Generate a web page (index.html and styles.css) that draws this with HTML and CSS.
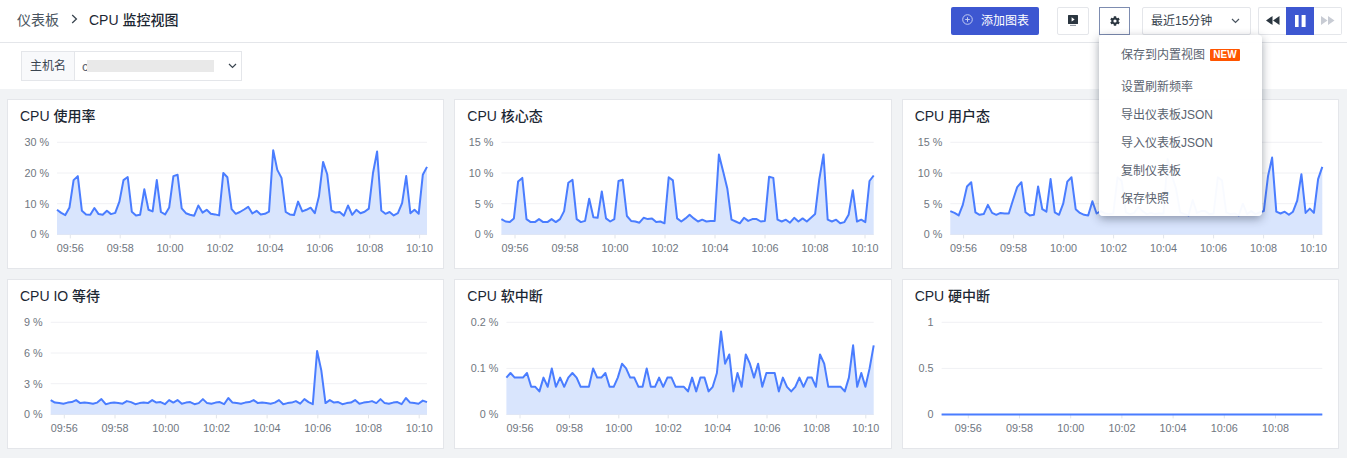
FILE: index.html
```html
<!DOCTYPE html>
<html lang="zh-CN">
<head>
    <meta charset="UTF-8">
    <meta name="viewport" content="width=device-width, initial-scale=1.0">
    <title>CPU 监控视图</title>
    <link rel="stylesheet" href="styles.css">
</head>
<body>
    <header class="topbar">
        <nav class="crumbs">
            <span class="crumb-parent">仪表板</span>
            <svg class="crumb-sep" width="7" height="10" viewBox="0 0 7 10"><path d="M1.2 1 5.4 5 1.2 9" fill="none" stroke="#3a4550" stroke-width="1.3"/></svg>
            <span class="crumb-current">CPU 监控视图</span>
        </nav>
        <div class="actions">
            <button class="btn-add">
                <svg width="11" height="11" viewBox="0 0 11 11"><circle cx="5.5" cy="5.5" r="4.8" fill="none" stroke="#c3ccf2" stroke-width="1"/><path d="M3.2 5.5h4.6M5.5 3.2v4.6" stroke="#c3ccf2" stroke-width="1"/></svg>
                添加图表
            </button>
            <button class="btn-icon btn-play">
                <svg width="10" height="11" viewBox="0 0 10 11"><path d="M.6 0h8.8a.6.6 0 0 1 .6.6v7.8a.6.6 0 0 1-.6.6H.6a.6.6 0 0 1-.6-.6V.6A.6.6 0 0 1 .6 0z" fill="#2b3640"/><path d="M3.6 2.3 6.6 4.4 3.6 6.5z" fill="#fff"/><path d="M2 10.4h6" stroke="#8a929c" stroke-width="1"/></svg>
            </button>
            <div class="settings">
                <button class="btn-icon btn-gear">
                    <svg width="12" height="12" viewBox="0 0 24 24"><path fill="#2b3640" d="M19.14 12.94c.04-.3.06-.61.06-.94 0-.32-.02-.64-.07-.94l2.03-1.58a.49.49 0 0 0 .12-.61l-1.92-3.32a.49.49 0 0 0-.59-.22l-2.39.96c-.5-.38-1.03-.7-1.62-.94l-.36-2.54a.48.48 0 0 0-.48-.41h-3.84c-.24 0-.43.17-.47.41l-.36 2.54c-.59.24-1.13.57-1.62.94l-2.39-.96a.48.48 0 0 0-.59.22L2.74 8.87c-.12.21-.08.47.12.61l2.03 1.58c-.05.3-.09.63-.09.94s.02.64.07.94l-2.03 1.58a.49.49 0 0 0-.12.61l1.92 3.32c.12.22.37.29.59.22l2.39-.96c.5.38 1.03.7 1.62.94l.36 2.54c.05.24.24.41.48.41h3.84c.24 0 .44-.17.47-.41l.36-2.54c.59-.24 1.13-.56 1.62-.94l2.39.96c.22.08.47 0 .59-.22l1.92-3.32c.12-.22.07-.47-.12-.61l-2.01-1.58zM12 15.2A3.2 3.2 0 1 1 12 8.8a3.2 3.2 0 0 1 0 6.4z"/></svg>
                </button>
                <ul class="menu">
                    <li class="menu-first">保存到内置视图<span class="badge-new">NEW</span></li>
                    <li>设置刷新频率</li>
                    <li>导出仪表板JSON</li>
                    <li>导入仪表板JSON</li>
                    <li>复制仪表板</li>
                    <li>保存快照</li>
                </ul>
            </div>
            <div class="range">
                <span class="range-text">最近15分钟</span>
                <svg width="9" height="6" viewBox="0 0 9 6"><path d="M1 1 4.5 4.5 8 1" fill="none" stroke="#4a5560" stroke-width="1.2"/></svg>
            </div>
            <div class="player">
                <button class="player-btn">
                    <svg width="14" height="9" viewBox="0 0 14 9"><path d="M6.5 0v9L0 4.5zM13.5 0v9L7 4.5z" fill="#2b3640"/></svg>
                </button>
                <button class="player-btn player-on">
                    <svg width="11" height="12" viewBox="0 0 11 12"><path d="M0 0h3.6v12H0zM6.6 0h4v12h-4z" fill="#fff"/></svg>
                </button>
                <button class="player-btn">
                    <svg width="14" height="9" viewBox="0 0 14 9"><path d="M0 0v9l6.5-4.5zM7 0v9l6.5-4.5z" fill="#c8ccd4"/></svg>
                </button>
            </div>
        </div>
    </header>

    <div class="filters">
        <div class="filter">
            <span class="filter-label">主机名</span>
            <div class="filter-value">
                <span class="host">c</span>
                <span class="host-mask"></span>
                <svg width="9" height="6" viewBox="0 0 9 6"><path d="M1 1 4.5 4.5 8 1" fill="none" stroke="#3a4550" stroke-width="1.2"/></svg>
            </div>
        </div>
    </div>

    <main class="grid" id="grid"></main>

    <script src="charts.js"></script>
</body>
</html>
```

FILE: styles.css
```css
* {
    box-sizing: border-box;
}
html, body {
    margin: 0;
    height: 100%;
}
body {
    font-family: "Liberation Sans", "Noto Sans CJK SC", sans-serif;
    font-size: 12px;
    color: #1c2733;
    background-color: #f1f3f5;
    overflow: hidden;
}
button {
    font-family: inherit;
    padding: 0;
    cursor: pointer;
}
.topbar {
    display: flex;
    justify-content: space-between;
    align-items: center;
    height: 43px;
    padding: 0 5px 1px 17px;
    background-color: #fff;
    border-bottom: 1px solid #e4e6ea;
}
.crumbs {
    display: flex;
    align-items: center;
    margin-bottom: 3px;
    font-size: 14px;
}
.crumb-parent {
    color: #4a5560;
}
.crumb-sep {
    margin: 0 11px 0 12px;
}
.crumb-current {
    font-weight: 500;
}
.actions {
    display: flex;
    align-items: center;
}
.btn-add {
    display: flex;
    align-items: center;
    gap: 8px;
    width: 88px;
    height: 28px;
    padding: 0 0 2px 11px;
    margin-right: 18px;
    font-size: 12px;
    color: #fff;
    background-color: #3d57d1;
    border: none;
    border-radius: 2px;
}
.btn-icon {
    display: flex;
    justify-content: center;
    align-items: center;
    width: 32px;
    height: 28px;
    background-color: #fff;
    border: 1px solid #e4e6ea;
    border-radius: 2px;
}
.btn-play {
    margin-right: 10px;
}
.btn-gear {
    width: 31px;
    border-color: #7d8cb0;
    border-radius: 0;
}
.settings {
    position: relative;
    margin-right: 12px;
}
.menu {
    position: absolute;
    top: 28px;
    left: 0;
    z-index: 5;
    width: 163px;
    margin: 0;
    padding: 6px 0 3px;
    list-style: none;
    background-color: rgba(255, 255, 255, 0.965);
    border-radius: 4px;
    box-shadow: 0 3px 10px rgba(30, 40, 60, 0.42);
}
.menu li {
    display: flex;
    align-items: center;
    height: 28px;
    padding: 0 0 2px 22px;
    color: #5a6370;
}
.menu .menu-first {
    margin-bottom: 4px;
}
.badge-new {
    width: 30px;
    height: 12px;
    margin: 2px 0 0 5px;
    font-size: 10px;
    font-weight: bold;
    line-height: 12px;
    text-align: center;
    color: #fff;
    background-color: #ff5500;
    border-radius: 1px;
}
.range {
    display: flex;
    justify-content: space-between;
    align-items: center;
    width: 109px;
    height: 28px;
    padding: 0 10px 0 8px;
    margin-right: 7px;
    color: #3a4550;
    background-color: #fff;
    border: 1px solid #e4e6ea;
    border-radius: 2px;
}
.range-text {
    margin-bottom: 2px;
}
.player {
    display: flex;
    height: 28px;
}
.player-btn {
    display: flex;
    justify-content: center;
    align-items: center;
    width: 28px;
    height: 28px;
    background-color: #fff;
    border: 1px solid #e4e6ea;
}
.player-btn:first-child {
    border-radius: 2px 0 0 2px;
    border-right: none;
}
.player-btn:last-child {
    border-radius: 0 2px 2px 0;
    border-left: none;
}
.player-on {
    background-color: #3d57d1;
    border-color: #3d57d1;
}
.filters {
    height: 46px;
    padding: 8px 0 0 21px;
    background-color: #fff;
}
.filter {
    display: flex;
    width: 221px;
    height: 30px;
    border: 1px solid #e4e6ea;
}
.filter-label {
    display: flex;
    align-items: center;
    width: 53px;
    padding: 0 0 3px 8px;
    color: #3a4550;
    background-color: #f8f9fb;
    border-right: 1px solid #e4e6ea;
}
.filter-value {
    display: flex;
    flex: 1;
    align-items: center;
    padding-left: 7px;
    color: #5a6370;
}
.host {
    width: 5px;
    font-size: 13px;
}
.host-mask {
    width: 127px;
    height: 12px;
    margin-right: 14px;
    background-color: #e9e9e9;
}
.grid {
    display: grid;
    grid-template-columns: repeat(3, 1fr);
    grid-auto-rows: 170px;
    gap: 10px;
    padding: 10px 8px 0 7px;
}
.card {
    background-color: #fff;
    border: 1px solid #e4e6ea;
}
.card-title {
    height: 32px;
    margin: 0;
    padding: 8px 0 0 12px;
    font-size: 14px;
    font-weight: 500;
    line-height: 16px;
    color: #1c2733;
}
.chart {
    display: block;
    width: 435px;
    height: 136px;
}
.chart text {
    font-size: 10.8px;
    fill: #6f7680;
}
.chart-grid {
    stroke: #f0f1f4;
    stroke-width: 1;
}
.chart-axis {
    stroke: #e2e5ea;
    stroke-width: 1;
}
.chart-area {
    fill: #d9e5fd;
}
.chart-line {
    fill: none;
    stroke: #4a7dff;
    stroke-width: 2;
    stroke-linejoin: round;
}
```

FILE: charts.js
```js
// IO wait sits at about 1.1 with small bumps, so only the bumps are listed
function ioData() {
    const bumps = {0: 1.4, 6: 1.4, 12: 1.5, 18: 1.3, 24: 1.4, 28: 1.4, 30: 1.4, 36: 1.5, 42: 1.6, 48: 1.4, 54: 1.4,
                   58: 1.3, 60: 1.5, 63: 6.2, 64: 4.3, 66: 1.4, 72: 1.4, 76: 1.3, 78: 1.5, 84: 1.6, 88: 1.35};
    const wobble = [1.1, 1.15, 1.1, 1.05, 1.15, 1.2, 1.0];
    const values = [];
    for (let i = 0; i < 90; i++) {
        values.push(bumps[i] || wobble[i % wobble.length]);
    }
    return values;
}

const times = ["09:56", "09:58", "10:00", "10:02", "10:04", "10:06", "10:08", "10:10"];

const charts = [
    {
        title: "CPU 使用率", left: 49, right: 419, firstTick: 62.3, step: 49.9, max: 30, unit: " %",
        yLabels: [0, 10, 20, 30],
        data: [8, 7, 6.3, 8.8, 17.7, 19, 7.7, 6.5, 6.4, 8.6, 6.6, 6.4, 7.7, 6.6, 7, 10.7, 17.7, 18.7, 7.4, 6.2,
               6.4, 14.7, 8, 7.5, 17.7, 7.3, 6.5, 8.8, 19, 19.4, 8.5, 6.9, 6.4, 6.1, 9.4, 7.1, 8, 6.7, 6.5, 6.2,
               20, 18.6, 8.2, 6.7, 7.3, 8.1, 9, 6.8, 7.7, 6.5, 6.7, 7.4, 27.4, 21, 18.4, 7.3, 6.5, 6.3, 10.7, 7.5,
               8, 8.7, 6.9, 12.3, 23.6, 19.6, 7.8, 7.1, 7.3, 6.1, 9.4, 6.4, 8, 6.9, 7.4, 8.4, 20, 27, 7.8, 6.7,
               7.3, 6.2, 6.9, 10.2, 19, 6.9, 8, 6.7, 19.4, 22]
    },
    {
        title: "CPU 核心态", left: 46.4, right: 418.7, firstTick: 60, step: 50, max: 15, unit: " %",
        yLabels: [0, 5, 10, 15],
        data: [2.5, 2.1, 2, 2.6, 8.6, 9.2, 2.5, 2, 2, 2.5, 2, 2, 2.5, 2, 2.5, 3.8, 8.4, 8.9, 2.5, 2,
               2.2, 5.8, 2.8, 2.7, 7, 2.6, 2.1, 2.5, 8.7, 8.9, 3, 2.2, 2.1, 1.9, 2.7, 2.5, 2.6, 2, 2.1, 1.8,
               9.3, 8.8, 2.6, 2.1, 2.6, 3.2, 2.6, 2.1, 2.4, 2.1, 2.2, 2.2, 13, 10.3, 7.5, 2.4, 2.1, 1.8, 2.7, 2.2,
               2.5, 2.5, 2.1, 2.2, 9.4, 9.2, 2.4, 2.1, 2.4, 1.9, 2.7, 2.1, 2.6, 2.1, 2.7, 3.3, 9, 13, 2.4, 2.1,
               2.4, 1.8, 2, 3.2, 7.2, 2.1, 2.4, 2, 8.7, 9.6]
    },
    {
        title: "CPU 用户态", left: 47.3, right: 419.3, firstTick: 60.6, step: 50, max: 15, unit: " %",
        yLabels: [0, 5, 10, 15],
        data: [3.8, 3.5, 3.1, 4.8, 7.8, 8.5, 3.6, 3.2, 3.3, 4.8, 3.5, 3.2, 3.5, 3.4, 3.4, 5.6, 7.7, 8.5, 3.6, 3.1,
               3.2, 7.8, 4.1, 3.7, 9, 3.6, 3.2, 5, 8.6, 9.3, 4.1, 3.5, 3.2, 3.1, 5.4, 3.4, 3.8, 3.4, 3.3, 3.4,
               9.3, 8.7, 3.6, 3.3, 3.5, 4.5, 3.8, 3.3, 3.5, 3.3, 3.4, 3.4, 12.3, 9.6, 7.5, 3.6, 3.3, 3.1, 5.6, 3.5,
               3.8, 3.8, 3.3, 3.4, 9.3, 8.8, 3.6, 3.3, 3.4, 3.1, 5, 3.3, 3.8, 3.3, 3.6, 3.8, 9.5, 12.5, 3.7, 3.4,
               3.7, 3.2, 3.7, 5.5, 9.8, 3.5, 4.2, 3.5, 9, 11]
    },
    {
        title: "CPU IO 等待", left: 42.7, right: 419, firstTick: 56.3, step: 50.7, max: 9, unit: " %",
        yLabels: [0, 3, 6, 9],
        data: ioData()
    },
    {
        title: "CPU 软中断", left: 51.4, right: 418.7, firstTick: 65, step: 49.4, max: 0.2, unit: " %",
        yLabels: [0, 0.1, 0.2],
        data: [0.08, 0.09, 0.08, 0.08, 0.08, 0.09, 0.06, 0.06, 0.05, 0.08, 0.06, 0.1, 0.06, 0.08, 0.06, 0.08, 0.09, 0.08, 0.06, 0.06,
               0.06, 0.1, 0.08, 0.08, 0.09, 0.06, 0.06, 0.08, 0.11, 0.1, 0.08, 0.08, 0.06, 0.06, 0.1, 0.06, 0.06, 0.08, 0.06, 0.08,
               0.08, 0.06, 0.06, 0.06, 0.05, 0.08, 0.05, 0.08, 0.08, 0.05, 0.06, 0.09, 0.18, 0.11, 0.13, 0.05, 0.09, 0.06, 0.13, 0.11,
               0.08, 0.11, 0.06, 0.09, 0.09, 0.09, 0.05, 0.08, 0.06, 0.05, 0.06, 0.08, 0.06, 0.08, 0.08, 0.06, 0.13, 0.11, 0.06, 0.06,
               0.06, 0.06, 0.05, 0.08, 0.15, 0.06, 0.09, 0.06, 0.1, 0.15]
    },
    {
        title: "CPU 硬中断", left: 38.6, right: 419.3, firstTick: 65.3, step: 51.2, max: 1, unit: "", flat: true,
        yLabels: [0, 0.5, 1],
        data: [0, 0]
    }
];

const TOP = 10.3;
const BOTTOM = 102.4;

function lineTag(x1, y1, x2, y2, cls) {
    return `<line x1="${x1}" y1="${y1}" x2="${x2}" y2="${y2}" class="${cls}"/>`;
}

function buildChart(c) {
    const yOf = v => BOTTOM - (v / c.max) * (BOTTOM - TOP);
    const xOf = i => c.left + (i / (c.data.length - 1)) * (c.right - c.left);
    let out = "";

    // grid lines and y labels
    c.yLabels.forEach(v => {
        const y = yOf(v).toFixed(1);
        if (v !== 0) {
            out += lineTag(c.left, y, c.right, y, "chart-grid");
        }
        out += `<text x="${c.left - 8}" y="${+y + 4}" text-anchor="end">${v}${c.unit}</text>`;
    });

    out += lineTag(c.left, BOTTOM, c.right, BOTTOM, "chart-axis");

    // time ticks
    const labels = c.flat ? times.slice(0, 7) : times;
    labels.forEach((t, i) => {
        const x = (c.firstTick + i * c.step).toFixed(1);
        out += lineTag(x, BOTTOM, x, BOTTOM + 4, "chart-axis");
        out += `<text x="${x}" y="120" text-anchor="middle">${t}</text>`;
    });

    const points = c.data.map((v, i) => xOf(i).toFixed(1) + "," + yOf(v).toFixed(1)).join(" ");
    if (!c.flat) {
        out += `<polygon class="chart-area" points="${c.left},${BOTTOM} ${points} ${c.right},${BOTTOM}"/>`;
    }
    out += `<polyline class="chart-line" points="${points}"/>`;
    return out;
}

const grid = document.getElementById("grid");
charts.forEach(c => {
    const card = document.createElement("section");
    card.className = "card";
    card.innerHTML = `<h3 class="card-title">${c.title}</h3><svg class="chart" viewBox="0 0 435 136">${buildChart(c)}</svg>`;
    grid.appendChild(card);
});
```
